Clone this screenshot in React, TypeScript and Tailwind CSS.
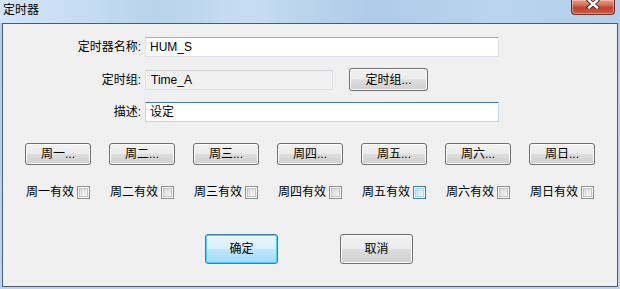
import React from "react";

const FONT = "font-[family-name:'Liberation_Sans','Noto_Sans_CJK_SC',sans-serif]";

function Btn({ children, className }: { children: React.ReactNode; className: string }) {
  return (
    <div
      className={`flex items-center justify-center rounded-[3px] border border-[#707070] bg-[linear-gradient(to_bottom,#f2f2f2_0%,#ebebeb_48%,#dddddd_52%,#cfcfcf_100%)] shadow-[inset_0_0_0_1px_#fbfbfb] text-[12px] leading-none text-black ${className}`}
    >
      {children}
    </div>
  );
}

function Check({ hover }: { hover?: boolean }) {
  return hover ? (
    <div className="ml-[3px] h-[13px] w-[13px] border border-[#3c7fb1] bg-white p-[1px]">
      <div className="h-full w-full border border-[#a5d5f5] bg-[linear-gradient(135deg,#b1dffd,#e9f7fe)]" />
    </div>
  ) : (
    <div className="ml-[3px] h-[13px] w-[13px] border border-[#8e8f8f] bg-white p-[1px]">
      <div className="h-full w-full border border-[#c3c3c3] bg-[linear-gradient(135deg,#d8d8d8,#f7f7f7)]" />
    </div>
  );
}

const days = ["一", "二", "三", "四", "五", "六", "日"];

export default function App() {
  return (
    <div
      className={`flex h-[289px] w-[620px] flex-col overflow-hidden bg-[linear-gradient(to_bottom,#d6e7f7_0px,#bcd6ef_12px,#b2cfec_23px,#b9d5f0_100%)] ${FONT}`}
    >
      {/* title bar */}
      <div className="flex h-[23px] shrink-0 items-start justify-between bg-[linear-gradient(to_right,#d3e6f8_0%,#b9d3ec_25%,#c6dcf1_40%,#aecbe8_60%,#bad4ee_80%,#b3cfeb_100%)]">
        <div className="pl-[3px] pt-[3px] text-[12px] leading-[14px] text-black">定时器</div>
        <div className="mr-[5px] flex h-[15px] w-[44px] items-start justify-center rounded-b-[4px] border border-t-0 border-[#6b2b22] bg-[linear-gradient(to_bottom,#e3a08e_0%,#d0705c_35%,#c2402f_55%,#cd5940_100%)] shadow-[inset_0_0_0_1px_rgba(255,210,200,0.5)]">
          <svg width="14" height="10" viewBox="0 0 14 10" className="mt-[-1px]">
            <path d="M3 1.5 L11 8.5 M11 1.5 L3 8.5" stroke="#4a2a26" strokeWidth="4.2" strokeLinecap="square" />
            <path d="M3 1.5 L11 8.5 M11 1.5 L3 8.5" stroke="#ffffff" strokeWidth="2.4" strokeLinecap="square" />
          </svg>
        </div>
      </div>

      {/* client */}
      <div className="flex flex-1 flex-col px-[2px] pb-[2px]">
        <div className="flex flex-1 flex-col border border-[#4f5b69] bg-[#f0f0f0] text-[12px] text-black">
          {/* row 1 */}
          <div className="mt-[13px] flex h-[20px] items-center">
            <div className="w-[138px] text-right">定时器名称:</div>
            <div className="ml-[4px] flex h-[20px] w-[354px] items-center border border-[#e2e3ea] border-t-[#abadb3] bg-white pl-[4px]">
              HUM_S
            </div>
          </div>
          {/* row 2 */}
          <div className="mt-[11px] flex h-[23px] items-center">
            <div className="w-[138px] text-right">定时组:</div>
            <div className="ml-[4px] flex h-[20px] w-[188px] items-center border border-[#e2e3ea] border-t-[#d0d1d5] bg-[#f0f0f0] pl-[5px]">
              Time_A
            </div>
            <Btn className="ml-[16px] h-[23px] w-[79px]">定时组...</Btn>
          </div>
          {/* row 3 */}
          <div className="mt-[11px] flex h-[20px] items-center">
            <div className="w-[138px] text-right">描述:</div>
            <div className="ml-[4px] flex h-[20px] w-[354px] items-center border border-[#b7d9ed] border-t-[#3d7bad] bg-white pl-[4px]">
              设定
            </div>
          </div>

          {/* week buttons */}
          <div className="mt-[21px] flex h-[22px] gap-[18px] pl-[22px]">
            {days.map((d) => (
              <Btn key={d} className="h-[22px] w-[66px]">
                {"周" + d + "..."}
              </Btn>
            ))}
          </div>

          {/* checkboxes */}
          <div className="mt-[19px] flex h-[16px] pl-[23px]">
            {days.map((d) => (
              <div key={d} className="flex w-[84px] items-center">
                <span className="leading-none">{"周" + d + "有效"}</span>
                <Check hover={d === "五"} />
              </div>
            ))}
          </div>

          {/* ok / cancel */}
          <div className="mt-[34px] flex h-[30px] pl-[202px]">
            <div className="flex h-[30px] w-[73px] items-center justify-center rounded-[3px] border border-[#3c7fb1] bg-[linear-gradient(to_bottom,#eaf6fd_0%,#d9f0fc_48%,#bee6fd_52%,#a7d9f5_100%)] shadow-[inset_0_0_0_1px_#48d1ff] text-[12px] leading-none">
              确定
            </div>
            <Btn className="ml-[62px] h-[30px] w-[73px]">取消</Btn>
          </div>
        </div>
      </div>
    </div>
  );
}
